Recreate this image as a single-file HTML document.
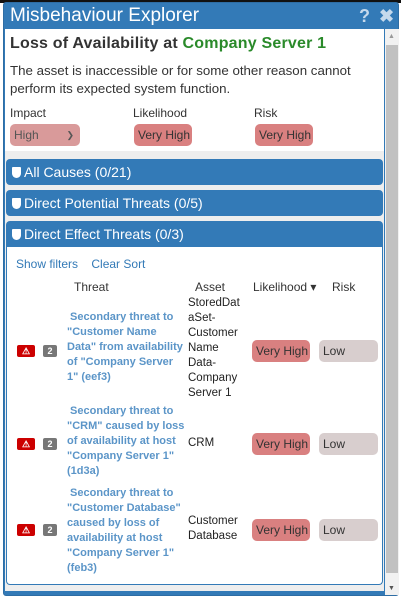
<!DOCTYPE html>
<html><head><style>
*{box-sizing:border-box}
body{margin:0;width:401px;height:598px;overflow:hidden;background:#fff;font-family:"Liberation Sans",Arial,sans-serif;position:relative}
.topblack{position:absolute;left:0;top:0;width:401px;height:3px;background:#111}
.win{position:absolute;left:3px;top:2px;width:396px;height:594px;background:#337ab7;border:1px solid #2e6da4;border-radius:3px}
.title{position:absolute;left:6px;top:1px;color:#fff;font-size:19px;line-height:24px}
.tb{position:absolute;top:1px;color:#c5d9ec;font-size:18px;font-weight:bold;line-height:24px}
.content{position:absolute;left:1px;top:26px;width:379px;height:562px;background:#eee;overflow:hidden}
.top{background:#fff;height:122px;padding:6px 5px}
h1{font-size:16px;margin:0;color:#333;font-weight:bold;letter-spacing:.2px}
h1 span{color:#2a8a2a}
.desc{font-size:13.3px;color:#333;line-height:18px;margin-top:9px}
.lbl{position:absolute;font-size:12px;color:#333}
.pill{position:absolute;background:#d98080;border-radius:5px;font-size:12px;color:#333;padding:0 4px;line-height:22px;height:22px;white-space:nowrap}
.hdr{position:absolute;left:1px;width:377px;height:26px;background:#337ab7;border-radius:4px;color:#fff;font-size:14px;line-height:26px;padding-left:6px}
.sh{display:inline-block;width:9px;height:11px;background:#fff;border-radius:1px 1px 5px 5px;margin-right:3px;vertical-align:-1px}
.body{position:absolute;left:1px;top:218px;width:377px;height:338px;background:#fff;border:1px solid #337ab7;border-top:none;border-radius:0 0 4px 4px}
.lnk{color:#337ab7;font-size:12px}
.th{position:absolute;font-size:12px;color:#333;white-space:nowrap}
.t{position:absolute;left:60px;width:120px;font-size:11px;font-weight:bold;color:#5b95c8;line-height:15px}
.a{position:absolute;left:181px;font-size:11.5px;color:#222;line-height:15px}
.w{position:absolute;left:10px;width:18px;height:12px;background:#c00;border-radius:2px;color:#fff;font-size:9px;text-align:center;line-height:12px;font-weight:bold}
.n{position:absolute;left:36px;width:14px;height:12px;background:#777;border-radius:2px;color:#fff;font-size:9px;text-align:center;line-height:12px;font-weight:bold}
.vh{position:absolute;left:245px;width:58px;height:22px;background:#d98080;border-radius:5px;font-size:12px;line-height:22px;padding-left:4px;color:#333;white-space:nowrap}
.lo{position:absolute;left:312px;width:59px;height:22px;background:#d8cece;border-radius:5px;font-size:12px;line-height:22px;padding-left:4px;color:#333}
.sb{position:absolute;left:381px;top:26px;width:14px;height:566px;background:#f1f1f1}
.thumb{position:absolute;left:1px;top:16px;width:12px;height:528px;background:#c1c1c1}
</style></head><body>
<div class="topblack"></div>
<div class="win">
<div class="title">Misbehaviour Explorer</div>
<div class="tb" style="left:355px">?</div><div class="tb" style="left:375px">✖</div>
<div class="content">
<div class="top">
<h1>Loss of Availability at <span>Company Server 1</span></h1>
<div class="desc">The asset is inaccessible or for some other reason cannot perform its expected system function.</div>
</div>
<div class="lbl" style="left:5px;top:77px">Impact</div>
<div class="lbl" style="left:128px;top:77px">Likelihood</div>
<div class="lbl" style="left:249px;top:77px">Risk</div>
<div class="pill" style="left:5px;top:95px;width:70px;background:#d99a9a;color:#555">High<span style="position:absolute;right:6px;top:0;font-size:9px">&#10095;</span></div>
<div class="pill" style="left:129px;top:95px;width:58px">Very High</div>
<div class="pill" style="left:250px;top:95px;width:58px">Very High</div>
<div class="hdr" style="top:130px"><span class="sh"></span>All Causes (0/21)</div>
<div class="hdr" style="top:161px"><span class="sh"></span>Direct Potential Threats (0/5)</div>
<div class="hdr" style="top:192px;border-radius:4px 4px 0 0"><span class="sh"></span>Direct Effect Threats (0/3)</div>
<div class="body">
<div style="position:absolute;left:9px;top:8px"><span class="lnk">Show filters</span>&nbsp;&nbsp; <span class="lnk">Clear Sort</span></div>
<div class="th" style="left:67px;top:33px">Threat</div>
<div class="th" style="left:188px;top:33px">Asset</div>
<div class="th" style="left:246px;top:33px">Likelihood ▾</div>
<div class="th" style="left:325px;top:33px">Risk</div>
<div class="t" style="top:63px">&nbsp;Secondary threat to "Customer Name Data" from availability of "Company Server 1" (eef3)</div>
<div class="a" style="top:49px">StoredDat<br>aSet-<br>Customer<br>Name<br>Data-<br>Company<br>Server 1</div>
<div class="w" style="top:98px">⚠</div><div class="n" style="top:98px">2</div>
<div class="vh" style="top:93px">Very High</div><div class="lo" style="top:93px">Low</div>
<div class="t" style="top:157px">&nbsp;Secondary threat to "CRM" caused by loss of availability at host "Company Server 1" (1d3a)</div>
<div class="a" style="top:189px">CRM</div>
<div class="w" style="top:191px">⚠</div><div class="n" style="top:191px">2</div>
<div class="vh" style="top:186px">Very High</div><div class="lo" style="top:186px">Low</div>
<div class="t" style="top:239px">&nbsp;Secondary threat to "Customer Database" caused by loss of availability at host "Company Server 1" (feb3)</div>
<div class="a" style="top:267px">Customer<br>Database</div>
<div class="w" style="top:277px">⚠</div><div class="n" style="top:277px">2</div>
<div class="vh" style="top:272px">Very High</div><div class="lo" style="top:272px">Low</div>
</div>
</div>
<div class="sb"><div style="position:absolute;left:3px;top:4px;font-size:7px;color:#999">▲</div><div class="thumb"></div><div style="position:absolute;left:3px;bottom:3px;font-size:7px;color:#555">▼</div></div>
</div>
</body></html>
